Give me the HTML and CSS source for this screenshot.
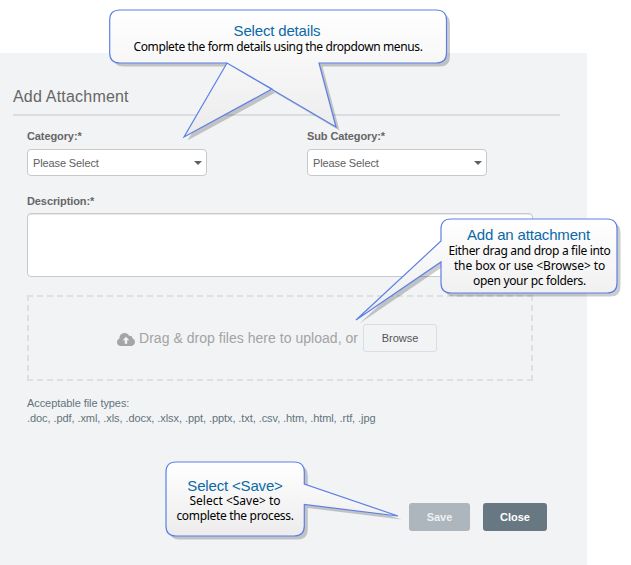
FILE: index.html
```html
<!DOCTYPE html>
<html lang="en">
<head>
<meta charset="utf-8">
<title>Add Attachment</title>
<link rel="stylesheet" href="styles.css">
</head>
<body>
<main class="panel">
  <h1 class="title"><span class="title-text">Add Attachment</span></h1>
  <form class="form">
    <div class="fields">
      <div class="field">
        <div class="label">Category:*</div>
        <div class="select"><span>Please Select</span><i class="caret"></i></div>
      </div>
      <div class="field">
        <div class="label">Sub Category:*</div>
        <div class="select"><span>Please Select</span><i class="caret"></i></div>
      </div>
    </div>
    <div class="label desc-label">Description:*</div>
    <div class="textarea"></div>
    <div class="dropzone">
      <svg class="cloud" width="18" height="13" viewBox="0 0 18 13"><path fill="#a5a5a5" fill-rule="evenodd" d="M4 13C1.700 13 0 11.400 0 9.200C0 7.500 1 6.100 2.500 5.500C2.300 2.300 4.700 0 7.600 0C9.700 0 11.400 1.100 12.200 2.900C14 2.200 15.700 3.500 15.300 5.300C17 5.800 18 7.300 18 9C18 11.300 16.200 13 14 13ZM9 3.700L5.700 7.300H7.800V10.800H10.200V7.300H12.300Z"/></svg>
      <span class="drop-text">Drag &amp; drop files here to upload, or</span>
      <span class="btn browse">Browse</span>
    </div>
    <div class="types"><div>Acceptable file types:</div><div>.doc, .pdf, .xml, .xls, .docx, .xlsx, .ppt, .pptx, .txt, .csv, .htm, .html, .rtf, .jpg</div></div>
    <div class="actions"><span class="btn save">Save</span><span class="btn close">Close</span></div>
  </form>
</main>

<svg class="overlay" width="631" height="565" viewBox="0 0 631 565">
  <defs>
    <linearGradient id="g1" gradientUnits="userSpaceOnUse" x1="0" y1="10" x2="0" y2="137"><stop offset="0" stop-color="#fff"/><stop offset="1" stop-color="#ebebeb"/></linearGradient>
    <linearGradient id="g2" gradientUnits="userSpaceOnUse" x1="0" y1="219" x2="0" y2="320"><stop offset="0" stop-color="#fff"/><stop offset="1" stop-color="#ebebeb"/></linearGradient>
    <linearGradient id="g3" gradientUnits="userSpaceOnUse" x1="0" y1="462" x2="0" y2="536"><stop offset="0" stop-color="#fff"/><stop offset="1" stop-color="#ececec"/></linearGradient>
    <path id="c1" d="M120 10H436Q446.500 10 446.500 20V53Q446.500 63 436 63H319L336 127L227 63L184 137L272 89L227 63H120Q109.700 63 109.700 53V20Q109.700 10 120 10Z"/>
    <path id="c2" d="M451 219H607Q617 219 617 229V283Q617 293 607 293H451Q441 293 441 283V262L356 320L441 241V229Q441 219 451 219Z"/>
    <path id="c3" d="M176 462H294Q304.300 462 304.300 472V484L398 516L304.300 504.500V526Q304.300 536 294 536H176Q166 536 166 526V472Q166 462 176 462Z"/>
  </defs>
  <g class="shade"><use href="#c1"/><use href="#c2"/><use href="#c3"/></g>
  <g class="outline"><use href="#c1" fill="url(#g1)"/><use href="#c2" fill="url(#g2)"/><use href="#c3" fill="url(#g3)"/></g>
</svg>
<section class="callout one"><h2>Select details</h2><p class="tight">Complete the form details using the dropdown menus.</p></section>
<section class="callout two"><h2>Add an attachment</h2><p class="tight">Either drag and drop a file into</p><p class="snug">the box or use &lt;Browse&gt; to</p><p class="tight">open your pc folders.</p></section>
<section class="callout three"><h2>Select &lt;Save&gt;</h2><p>Select &lt;Save&gt; to</p><p class="tight">complete the process.</p></section>
</body>
</html>
```
FILE: styles.css
```css
* { box-sizing: border-box; }
body { margin: 0; width: 631px; height: 565px; overflow: hidden; background: #fff; font-family: "Liberation Sans", Arial, sans-serif; font-size: 11px; color: #606468; position: relative; }
.panel { margin-top: 53px; width: 587px; height: 512px; background: #f2f3f5; padding: 31px 27px 0 13px; }
.title { margin: 0; height: 32px; border-bottom: 2px solid #dcdde0; font-weight: 400; font-size: 16px; line-height: 25px; color: #666; }
.title-text { letter-spacing: .2px; }
.form { padding: 13px 13px 0 14px; display: flex; flex-direction: column; }
.fields { display: flex; gap: 100px; }
.field { width: 180px; }
.label { font-weight: 700; height: 20px; line-height: 15px; color: #666; letter-spacing: -.1px; }
.desc-label { margin-top: 18px; height: 19px; }
.select { height: 27px; border: 1px solid #c8c9cb; border-radius: 4px; background: #fff; display: flex; align-items: center; justify-content: space-between; padding: 0 4px 0 5px; color: #606060; letter-spacing: -.12px; }
.caret { border: 4px solid transparent; border-top-color: #606060; border-bottom: 0; }
.textarea { width: 506px; height: 64px; border: 1px solid #c8c9cb; border-radius: 4px; background: #fff; box-shadow: inset 0 1px 1px #e8e8e8; }
.dropzone { width: 506px; height: 86px; margin-top: 18px; display: flex; align-items: center; padding-left: 90px;
  background:
    repeating-linear-gradient(90deg, #dedfe1 0 6px, transparent 6px 10px) top / 100% 2px no-repeat,
    repeating-linear-gradient(90deg, #dedfe1 0 6px, transparent 6px 10px) bottom / 100% 2px no-repeat,
    repeating-linear-gradient(180deg, #dedfe1 0 6px, transparent 6px 10px) left / 2px 100% no-repeat,
    repeating-linear-gradient(180deg, #dedfe1 0 6px, transparent 6px 10px) right / 2px 100% no-repeat; }
.drop-text { width: 219px; margin: 0 5px 0 4px; font-size: 14px; color: #a3a3a3; white-space: nowrap; letter-spacing: .03px; }
.cloud { flex: none; margin-top: 2px; }
.btn { height: 28px; border-radius: 3px; display: flex; align-items: center; justify-content: center; }
.browse { width: 74px; border: 1px solid #dcdde0; color: #555; }
.types { margin-top: 15px; line-height: 15px; color: #63737c; white-space: nowrap; letter-spacing: -.075px; }
.actions { display: flex; justify-content: flex-end; gap: 13px; margin-top: 77px; color: #fff; font-weight: 700; }
.save { width: 61px; background: #adb5bd; color: #eef0f2; }
.close { width: 64px; background: #687882; }
.overlay { position: absolute; left: 0; top: 0; }
.shade { fill: #000; opacity: .2; transform: translate(3.5px, 3.5px); }
.outline { stroke: #5c80e6; stroke-width: 1.2; }
.callout { position: absolute; text-align: center; color: #000; }
.callout h2 { margin: 0; font-size: 15px; line-height: 17px; font-weight: 400; color: #0b69a8; letter-spacing: -.17px; }
.callout p { margin: 0; font-family: "Noto Sans", sans-serif; font-size: 12px; line-height: 15px; white-space: nowrap; }
.callout .tight { letter-spacing: -.32px; }
.callout .snug { letter-spacing: -.1px; }
.callout.one .tight { letter-spacing: -.39px; }
.one { left: 110px; top: 22px; width: 336px; }
.one h2 { padding-right: 2px; }
.two { left: 441px; top: 226px; width: 177px; }
.two h2 { padding-right: 2px; }
.three { left: 166px; top: 477px; width: 138px; }
.callout.three h2 { height: 16px; }
```
